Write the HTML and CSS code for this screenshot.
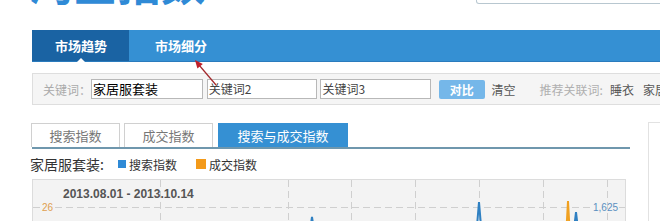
FILE: index.html
```html
<!DOCTYPE html>
<html lang="zh-CN">
<head>
<meta charset="utf-8">
<title>淘宝指数</title>
<link rel="stylesheet" href="styles.css">
</head>
<body>
<div class="page">
  <header class="header">
    <div class="logo">淘宝指数</div>
    <div class="top-search"></div>
  </header>

  <nav class="nav">
    <a class="nav-item active">市场趋势</a>
    <a class="nav-item">市场细分</a>
  </nav>

  <div class="searchbar">
    <span class="label">关键词：</span>
    <span class="kw kw1">家居服套装</span>
    <span class="kw kw2">关键词2</span>
    <span class="kw kw3">关键词3</span>
    <span class="btn">对比</span>
    <span class="clear">清空</span>
    <span class="rec-label">推荐关联词:</span>
    <span class="rec">睡衣</span>
    <span class="rec">家居服</span>
  </div>

  <div class="content">
    <div class="main">
      <div class="tabs">
        <div class="tab t1">搜索指数</div>
        <div class="tab t2">成交指数</div>
        <div class="tab t3 active">搜索与成交指数</div>
      </div>
      <div class="legend">
        <span class="legend-title">家居服套装:</span>
        <span class="sw sw-blue"></span><span class="legend-text">搜索指数</span>
        <span class="sw sw-orange"></span><span class="legend-text">成交指数</span>
      </div>
      <div class="chart">
        <svg class="chart-svg" width="592" height="58" viewBox="0 0 592 58">
          <g stroke="#cfcfcf" stroke-width="1" stroke-dasharray="7 4" fill="none">
            <line x1="127.5" y1="0" x2="127.5" y2="58"/>
            <line x1="255.5" y1="0" x2="255.5" y2="58"/>
            <line x1="318.5" y1="0" x2="318.5" y2="58"/>
            <line x1="382.5" y1="0" x2="382.5" y2="58"/>
            <line x1="446.5" y1="0" x2="446.5" y2="58"/>
            <line x1="510.5" y1="0" x2="510.5" y2="58"/>
            <line x1="574.5" y1="0" x2="574.5" y2="58"/>
            <line x1="0" y1="27.5" x2="8" y2="27.5"/>
            <line x1="22" y1="27.5" x2="558" y2="27.5"/>
            <line x1="586" y1="27.5" x2="592" y2="27.5"/>
          </g>
          <text x="30" y="18" class="chart-title">2013.08.01 - 2013.10.14</text>
          <text x="9" y="31" class="axis-l">26</text>
          <text x="560" y="31" class="axis-r">1,625</text>
          <polyline fill="none" stroke="#f0a020" stroke-width="2" points="528,60 533,58 535,21 537,58 542,60"/>
          <polyline fill="none" stroke="#2f80c2" stroke-width="2" points="0,60 276,58 279,37 282,58 443,58 446,22 449,58 540,58 543,32 546,58 592,60"/>
        </svg>
      </div>
    </div>
    <aside class="sidebar"></aside>
  </div>

  <svg class="pointer" width="60" height="40" viewBox="180 55 60 40">
    <line x1="199" y1="65" x2="216" y2="85" stroke="#a2282c" stroke-width="1.2"/>
    <polygon points="195,60 202.8,64 197.4,68.4" fill="#c0202a"/>
  </svg>
</div>
</body>
</html>
```

FILE: styles.css
```css
html, body {
  margin: 0;
  padding: 0;
  background: #fff;
  overflow: hidden;
}

body {
  font-family: "Noto Sans CJK SC", "Liberation Sans", sans-serif;
  font-size: 12px;
  color: #333;
}

.page {
  position: relative;
  width: 660px;
  padding-left: 32px;
  box-sizing: border-box;
}

/* header */
.header {
  height: 30px;
  display: flex;
  align-items: flex-start;
  justify-content: space-between;
}

.logo {
  margin-top: -40px;
  margin-left: -3px;
  font-size: 44px;
  line-height: 1;
  font-weight: bold;
  color: #2f8ad6;
}

.top-search {
  width: 190px;
  height: 20px;
  margin-top: -17px;
  margin-right: -8px;
  border: 1px solid #b8c7d0;
  border-top: none;
  border-bottom-left-radius: 3px;
  background: #fff;
}

/* nav */
.nav {
  display: flex;
  height: 31px;
  margin-right: -20px;
  background: #3590d3;
  border-bottom: 1px solid #2a7bbd;
}

.nav-item {
  position: relative;
  display: flex;
  align-items: center;
  height: 31px;
  padding: 0 22px 0 23px;
  font-size: 13px;
  font-weight: bold;
  color: #fff;
}

.nav-item.active {
  background: #1a63a3;
}

.nav-item + .nav-item {
  padding-left: 26px;
}

.nav-item.active::after {
  content: "";
  position: absolute;
  left: 50%;
  bottom: -1px;
  margin-left: -4px;
  border-left: 4px solid transparent;
  border-right: 4px solid transparent;
  border-bottom: 4px solid #fff;
}

/* search bar */
.searchbar {
  display: flex;
  align-items: center;
  height: 30px;
  margin-top: 11px;
  margin-right: -20px;
  padding-left: 10px;
  background: #f5f5f5;
  border: 1px solid #dedede;
  white-space: nowrap;
}

.label {
  width: 48px;
  color: #aaa;
}

.kw {
  box-sizing: border-box;
  height: 20px;
  line-height: 18px;
  padding: 0 1px;
  border: 1px solid #b8b8b8;
  background: #fff;
  color: #444;
}

.kw1 {
  width: 113px;
  color: #000;
  font-size: 13px;
}

.kw2 {
  width: 112px;
  margin-left: 4px;
}

.kw3 {
  width: 112px;
  margin-left: 3px;
}

.btn {
  width: 46px;
  height: 19px;
  line-height: 19px;
  margin-left: 8px;
  text-align: center;
  background: #75b7e9;
  color: #fff;
  font-weight: bold;
  border-radius: 2px;
}

.clear {
  margin-left: 7px;
  color: #555;
}

.rec-label {
  margin-left: 24px;
  color: #b0b0b0;
}

.rec {
  margin-left: 9px;
  color: #555;
}

.rec-label + .rec {
  margin-left: 7px;
}

/* content */
.content {
  display: flex;
  align-items: flex-start;
  margin-top: 18px;
}

.main {
  flex: none;
  width: 598px;
}

.sidebar {
  flex: none;
  width: 200px;
  height: 120px;
  margin-left: 18px;
  margin-top: -1px;
  border: 1px solid #e2e2e2;
  background: #fff;
}

/* tabs */
.tabs {
  display: flex;
  align-items: flex-end;
  height: 24px;
  border-bottom: 2px solid #6f97ad;
}

.tab {
  box-sizing: border-box;
  height: 24px;
  display: flex;
  align-items: center;
  justify-content: center;
  border: 1px solid #d0d0d0;
  border-bottom: none;
  font-size: 13px;
  color: #777;
  background: #fff;
}

.t1 {
  width: 89px;
  margin-left: -1px;
}

.t2 {
  width: 89px;
  margin-left: 4px;
}

.t3 {
  width: 130px;
  margin-left: 5px;
}

.tab.active {
  background: #3590d3;
  border-color: #3590d3;
  color: #fff;
}

/* legend */
.legend {
  display: flex;
  align-items: center;
  height: 18px;
  margin-top: 6px;
  white-space: nowrap;
}

.legend-title {
  margin-left: -2px;
  width: 88px;
  font-size: 14px;
  color: #333;
}

.sw {
  width: 8px;
  height: 8px;
  margin-right: 3px;
}

.sw-blue {
  background: #2f8ad6;
}

.sw-orange {
  width: 10px;
  height: 10px;
  margin-left: 19px;
  background: #f39a1a;
}

.legend-text {
  font-size: 12px;
  color: #333;
}

/* chart */
.chart {
  width: 592px;
  height: 58px;
  margin-top: 6px;
  border: 1px solid #dcdcdc;
  background: #f3f3f3;
}

.chart-svg {
  display: block;
}

.chart-title {
  font-family: "Liberation Sans", Arial, sans-serif;
  font-size: 12px;
  font-weight: bold;
  fill: #555;
}

.axis-l {
  font-family: "Liberation Sans", Arial, sans-serif;
  font-size: 10px;
  fill: #e0a050;
}

.axis-r {
  font-family: "Liberation Sans", Arial, sans-serif;
  font-size: 10px;
  fill: #5a8fc0;
}

/* annotation arrow overlay */
.pointer {
  position: absolute;
  left: 180px;
  top: 55px;
}
```
